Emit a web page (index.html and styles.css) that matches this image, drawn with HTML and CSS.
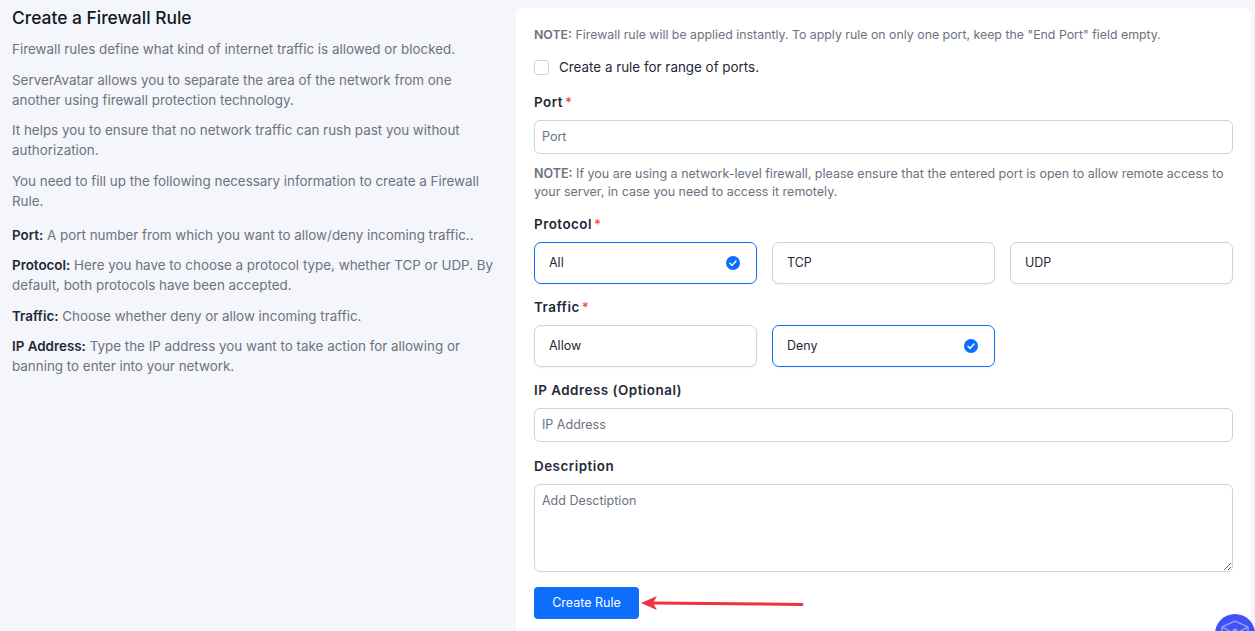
FILE: index.html
```html
<!DOCTYPE html>
<html lang="en">
<head>
<meta charset="utf-8">
<title>Create a Firewall Rule</title>
<link rel="stylesheet" href="styles.css">
</head>
<body>
<div class="page">
  <aside class="intro">
    <h1>Create a Firewall Rule</h1>
    <p>Firewall rules define what kind of internet traffic is allowed or blocked.</p>
    <p>ServerAvatar allows you to separate the area of the network from one another using firewall protection technology.</p>
    <p>It helps you to ensure that no network traffic can rush past you without authorization.</p>
    <p class="last-lead">You need to fill up the following necessary information to create a Firewall Rule.</p>
    <p><b>Port:</b> A port number from which you want to allow/deny incoming traffic..</p>
    <p><b>Protocol:</b> Here you have to choose a protocol type, whether TCP or UDP. By default, both protocols have been accepted.</p>
    <p><b>Traffic:</b> Choose whether deny or allow incoming traffic.</p>
    <p><b>IP Address:</b> Type the IP address you want to take action for allowing or banning to enter into your network.</p>
  </aside>
  <main class="card">
    <p class="note note-top"><b>NOTE:</b> Firewall rule will be applied instantly. To apply rule on only one port, keep the "End Port" field empty.</p>
    <label class="check"><span class="box"></span>Create a rule for range of ports.</label>
    <div class="label label-port">Port<span class="req">*</span></div>
    <input class="field" placeholder="Port">
    <p class="note note-mid"><b>NOTE:</b> If you are using a network-level firewall, please ensure that the entered port is open to allow remote access to your server, in case you need to access it remotely.</p>
    <div class="label label-protocol">Protocol<span class="req">*</span></div>
    <div class="options">
      <div class="option selected">All<svg class="tick" viewBox="0 0 14 14"><circle cx="7" cy="7" r="7"/><path d="M4 7.3l2.1 2.1L10 5"/></svg></div>
      <div class="option">TCP</div>
      <div class="option">UDP</div>
    </div>
    <div class="label label-traffic">Traffic<span class="req">*</span></div>
    <div class="options">
      <div class="option">Allow</div>
      <div class="option selected">Deny<svg class="tick" viewBox="0 0 14 14"><circle cx="7" cy="7" r="7"/><path d="M4 7.3l2.1 2.1L10 5"/></svg></div>
    </div>
    <div class="label label-ip">IP Address (Optional)</div>
    <input class="field" placeholder="IP Address">
    <div class="label label-desc">Description</div>
    <textarea class="area" placeholder="Add Desctiption"></textarea>
    <button class="submit" type="button">Create Rule</button>
  </main>
</div>
<svg class="arrow" viewBox="0 0 170 20" width="170" height="20"><path class="arrow-line" d="M14 9L162 10.5"/><path class="arrow-head" d="M1 9L17 2L13 9L17 16Z"/></svg>
<div class="bubble"><svg viewBox="0 0 40 40" width="40" height="40"><path class="hat" d="M20 7L33 13L33 23L20 31L7 23L7 13Z M7 13L20 20L33 13"/><circle class="hat-dot" cx="20" cy="17" r="2.5"/></svg></div>
</body>
</html>
```
FILE: styles.css
```css
* { box-sizing: border-box; }
html, body { margin: 0; height: 631px; overflow: hidden; }
body { background: #f4f6fb; font-family: "Inter", "Liberation Sans", sans-serif; color: #6b7280; position: relative; }
.page { display: flex; align-items: flex-start; padding: 8px 4px 0 12px; }
.intro { width: 484px; margin-right: 20px; flex: none; font-size: 13.4px; line-height: 20px; color: #6c7280; }
.intro h1 { margin: 0 0 11.2px; font-size: 17.4px; line-height: 20px; font-weight: 500; color: #111827; }
.intro p { margin: 0 0 10.5px; }
.intro b { font-weight: 600; color: #1f2937; }
.intro .last-lead { margin-bottom: 14px; }
.card { flex: 1; height: 640px; background: #fff; border-radius: 6px; padding: 18px 18px 0; }
.note { margin: 0; font-size: 12.5px; line-height: 18px; color: #6b7280; }
.note b { font-weight: 600; }
.note-top { font-size: 12.35px; }
.check { display: flex; align-items: center; margin-top: 14px; font-size: 13.4px; line-height: 19px; color: #1f2937; }
.box { width: 15px; height: 15px; border: 1px solid #cbd5e1; border-radius: 3px; margin-right: 10px; background: #fff; }
.label { font-size: 13.4px; line-height: 18px; font-weight: 600; letter-spacing: .5px; color: #1f2937; }
.label-port { margin-top: 16px; margin-bottom: 9px; }
.label-protocol { margin-top: 14px; margin-bottom: 9px; }
.label-traffic { margin-top: 14px; margin-bottom: 9px; }
.label-ip { margin-top: 14px; margin-bottom: 9px; }
.label-desc { margin-top: 15px; margin-bottom: 9px; }
.req { color: #ef4444; margin-left: 2px; font-weight: 500; letter-spacing: 0; }
.field { display: block; width: 100%; height: 34px; border: 1px solid #cbd5e1; border-radius: 6px; padding: 0 7px 2px; font: 12.5px "Inter", sans-serif; outline: none; background: #fff; }
.field::placeholder, .area::placeholder { color: #6b7280; opacity: 1; }
.note-mid { margin-top: 11px; }
.options { display: grid; grid-template-columns: repeat(3, 1fr); gap: 15px; }
.option { height: 42px; display: flex; align-items: center; justify-content: space-between; padding: 0 14px 2px; border: 1px solid #cbd5e1; border-radius: 7px; background: #fff; font-size: 12.5px; color: #1f2937; box-shadow: 0 1px 2px rgba(15, 23, 42, .06); }
.option.selected { border-color: #0d6efd; padding-right: 16px; padding-bottom: 0; line-height: 16px; }
.tick { width: 14px; height: 14px; }
.tick circle { fill: #0d6efd; }
.tick path { fill: none; stroke: #fff; stroke-width: 1.4; stroke-linecap: round; stroke-linejoin: round; }
.area { display: block; width: 100%; height: 88px; border: 1px solid #cbd5e1; border-radius: 6px; padding: 7px; font: 12.5px/18px "Inter", sans-serif; outline: none; resize: vertical; background: #fff; }
.submit { display: block; margin-top: 15px; width: 105px; height: 32px; padding: 0 0 2px; border: 0; border-radius: 4px; background: #0d6efd; color: #fff; font: 12.5px "Inter", sans-serif; }
.arrow { position: absolute; left: 640px; top: 594px; }
.arrow-line { stroke: #ee3342; stroke-width: 3; fill: none; stroke-linecap: round; }
.arrow-head { fill: #ee3342; }
.bubble { position: absolute; left: 1215px; top: 614px; width: 40px; height: 40px; border-radius: 50%; background: #3f51f7; }
.hat { fill: none; stroke: #8d98fb; stroke-width: 1.5; stroke-linejoin: round; }
.hat-dot { fill: #8d98fb; }
```
